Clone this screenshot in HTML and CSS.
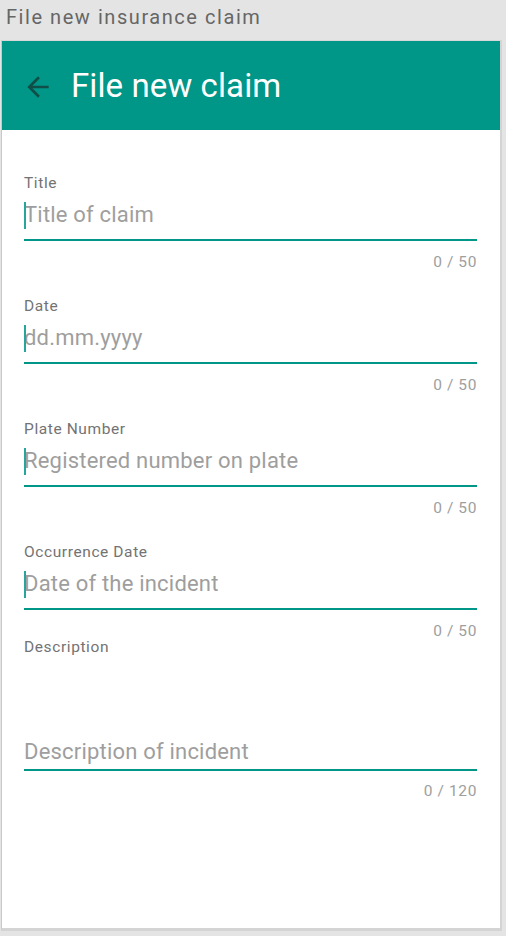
FILE: index.html
```html
<!DOCTYPE html>
<html>
<head>
<meta charset="utf-8">
<link rel="stylesheet" href="styles.css">
</head>
<body>
<div class="window-title">File new insurance claim</div>
<div class="frame">
  <header class="appbar">
    <svg class="back" width="32" height="32" viewBox="0 0 24 24"><path d="M20 11H7.83l5.59-5.59L12 4l-8 8 8 8 1.41-1.41L7.83 13H20v-2z"/></svg>
    <h1 class="appbar-title">File new claim</h1>
  </header>
  <main class="form">
    <div class="field">
      <div class="label">Title</div>
      <div class="input"><span class="caret"></span>Title of claim</div>
      <div class="counter">0 / 50</div>
    </div>
    <div class="field">
      <div class="label">Date</div>
      <div class="input"><span class="caret"></span>dd.mm.yyyy</div>
      <div class="counter">0 / 50</div>
    </div>
    <div class="field">
      <div class="label">Plate Number</div>
      <div class="input"><span class="caret"></span>Registered number on plate</div>
      <div class="counter">0 / 50</div>
    </div>
    <div class="field field-tight">
      <div class="label">Occurrence Date</div>
      <div class="input"><span class="caret"></span>Date of the incident</div>
      <div class="counter">0 / 50</div>
    </div>
    <div class="field">
      <div class="label">Description</div>
      <div class="input textarea">Description of incident</div>
      <div class="counter counter-area">0 / 120</div>
    </div>
  </main>
</div>
</body>
</html>
```
FILE: styles.css
```css
* { box-sizing: border-box; }
html, body { margin: 0; padding: 0; }
body {
  background: #e4e4e4;
  font-family: Roboto, "Noto Sans", sans-serif;
  width: 506px;
  height: 936px;
  overflow: hidden;
}
.window-title {
  height: 40px;
  padding-left: 6px;
  font-size: 20px;
  letter-spacing: 1.55px;
  line-height: 34px;
  color: #666666;
}
.frame {
  margin-left: 1px;
  width: 501px;
  height: 891px;
  background: #ffffff;
  border-left: 1px solid #c9c9c9;
  border-top: 1px solid #d8d8d8;
  border-right: 2px solid #d4d4d4;
  border-bottom: 3px solid #d4d4d4;
  display: flex;
  flex-direction: column;
}
.appbar {
  height: 89px;
  background: #009688;
  display: flex;
  align-items: center;
  padding-left: 20px;
  gap: 17px;
  flex-shrink: 0;
}
.back { fill: #0f4f48; margin-top: 3px; }
.appbar-title {
  margin: 0;
  font-weight: 400;
  font-size: 33px;
  color: #ffffff;
  letter-spacing: 0.1px;
}
.form {
  padding: 44px 23px 0 22px;
}
.field { margin-bottom: 26px; }
.field-tight { margin-bottom: -2px; }
.label {
  font-size: 15.5px;
  letter-spacing: 0.6px;
  line-height: 18px;
  color: #737373;
}
.input {
  position: relative;
  padding: 11px 0 12px;
  font-size: 22px;
  letter-spacing: 0.2px;
  line-height: 24px;
  color: #9e9e9e;
  border-bottom: 2px solid #009688;
  white-space: nowrap;
}
.caret {
  position: absolute;
  left: 0;
  top: 10px;
  width: 1.5px;
  height: 27px;
  background: #26a69a;
}
.textarea {
  height: 115px;
  display: flex;
  align-items: flex-end;
  padding: 0 0 5px;
}
.counter {
  margin-top: 12px;
  font-size: 15.5px;
  letter-spacing: 0.6px;
  line-height: 18px;
  color: #9e9e9e;
  text-align: right;
}
.counter-area { margin-top: 11px; }
```
